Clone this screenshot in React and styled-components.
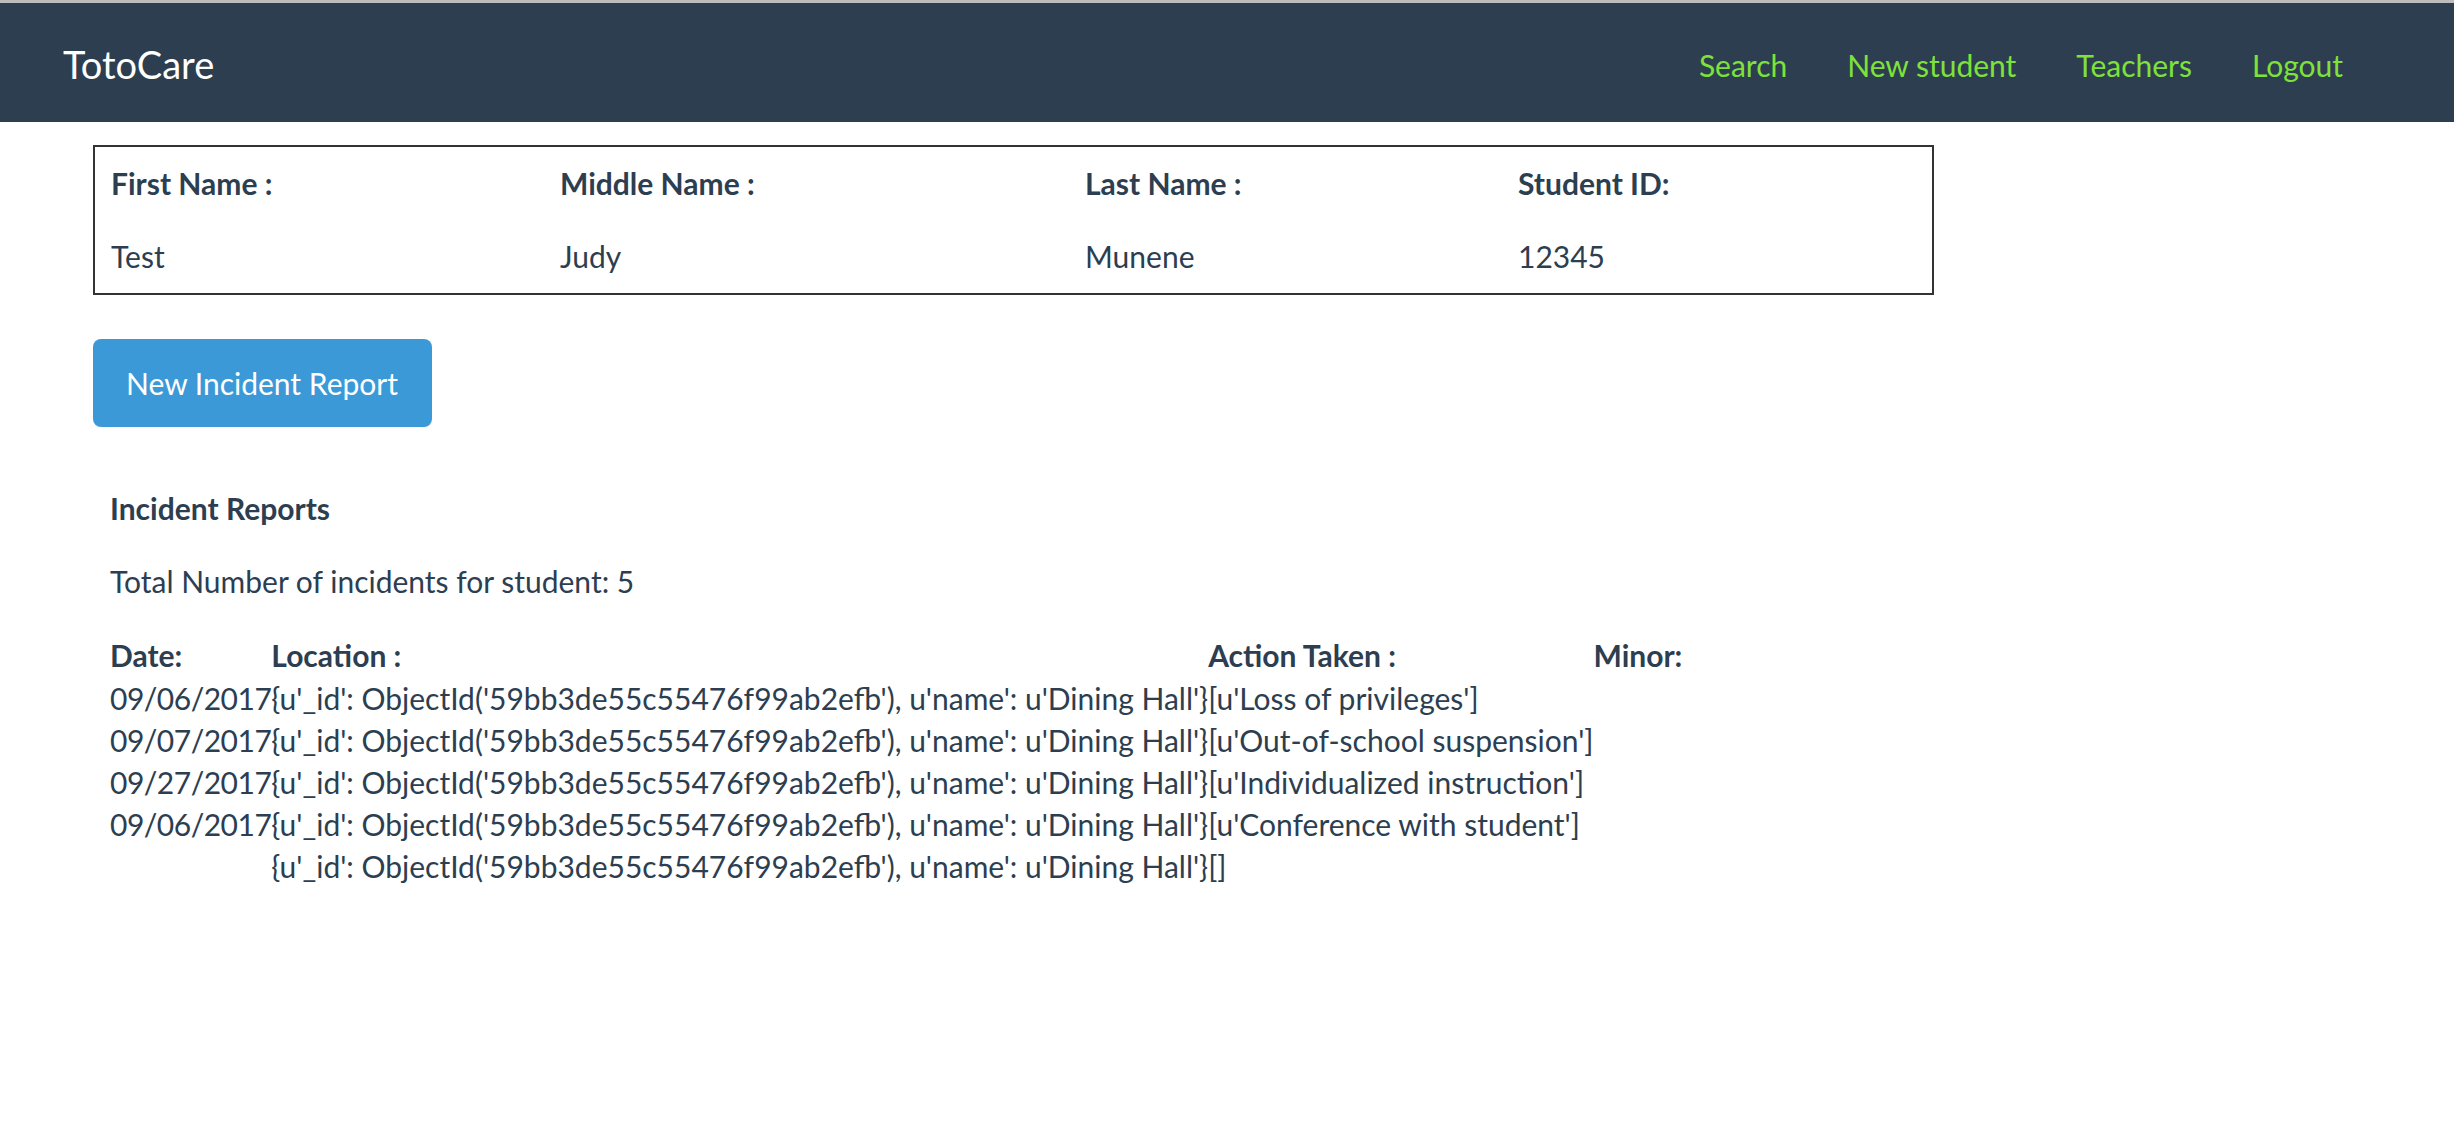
import React from 'react';
import styled, { createGlobalStyle } from 'styled-components';

const navy = '#2c3e50';
const lime = '#7ee23a';
const blue = '#3b99d8';

const GlobalStyle = createGlobalStyle`
  html, body {
    margin: 0;
    padding: 0;
    background: #ffffff;
    font-family: Lato, 'Open Sans', sans-serif;
    color: ${navy};
  }

  * {
    box-sizing: border-box;
  }
`;

const WindowEdge = styled.div`
  height: 3px;
  background: #bcbcbc;
`;

const Navbar = styled.nav`
  height: 119px;
  background: #2d3e50;
  display: flex;
  align-items: center;
  justify-content: space-between;
  padding: 0 81px 0 63px;
`;

const Brand = styled.a`
  font-size: 38px;
  color: #ffffff;
  text-decoration: none;
  padding-top: 2px;
`;

const NavLinks = styled.ul`
  display: flex;
  list-style: none;
  margin: 0;
  padding: 0;
`;

const NavLink = styled.a`
  display: block;
  padding: 4px 30px 0;
  font-size: 30px;
  color: ${lime};
  text-decoration: none;
`;

const Main = styled.main`
  padding: 23px 0 0 93px;
`;

const StudentBox = styled.section`
  width: 1841px;
  border: 2px solid #333333;
  padding-left: 16px;
  display: grid;
  grid-template-columns: 449px 525px 433px 1fr;
`;

const Cell = styled.div`
  font-size: 30px;
  line-height: 43px;
  padding: 15px 0;
  font-weight: ${(p) => (p.$head ? 700 : 400)};
`;

const Button = styled.button`
  margin-top: 44px;
  height: 88px;
  padding: 0 34px 0 33px;
  border: none;
  border-radius: 8px;
  background: ${blue};
  color: #ffffff;
  font-family: Lato, sans-serif;
  font-size: 30px;
  cursor: pointer;
`;

const Reports = styled.section`
  padding: 60px 0 0 17px;
`;

const Title = styled.p`
  margin: 0 0 30px;
  font-size: 30px;
  line-height: 43px;
  font-weight: 700;
`;

const Total = styled.p`
  margin: 0 0 30px;
  font-size: 30px;
  line-height: 43px;
`;

const Table = styled.table`
  border-collapse: collapse;
  font-size: 30px;
  line-height: 42px;

  th, td {
    padding: 0;
    text-align: left;
    white-space: nowrap;
    vertical-align: top;
  }

  th {
    font-weight: 700;
    line-height: 44px;
  }
`;

const DateCell = styled.td`
  letter-spacing: -0.5px;
`;

const student = [
  ['First Name :', 'Test'],
  ['Middle Name :', 'Judy'],
  ['Last Name :', 'Munene'],
  ['Student ID:', '12345'],
];

const location = "{u'_id': ObjectId('59bb3de55c55476f99ab2efb'), u'name': u'Dining Hall'}";

const incidents = [
  ['09/06/2017', "[u'Loss of privileges']"],
  ['09/07/2017', "[u'Out-of-school suspension']"],
  ['09/27/2017', "[u'Individualized instruction']"],
  ['09/06/2017', "[u'Conference with student']"],
  ['', '[]'],
];

export default function App() {
  return (
    <>
      <GlobalStyle />
      <WindowEdge />
      <Navbar>
        <Brand href="#">TotoCare</Brand>
        <NavLinks>
          {['Search', 'New student', 'Teachers', 'Logout'].map((l) => (
            <li key={l}>
              <NavLink href="#">{l}</NavLink>
            </li>
          ))}
        </NavLinks>
      </Navbar>

      <Main>
        <StudentBox>
          {student.map(([label]) => (
            <Cell $head key={label}>{label}</Cell>
          ))}
          {student.map(([label, value]) => (
            <Cell key={value}>{value}</Cell>
          ))}
        </StudentBox>

        <Button>New Incident Report</Button>

        <Reports>
          <Title>Incident Reports</Title>
          <Total>Total Number of incidents for student: 5</Total>
          <Table>
            <thead>
              <tr>
                <th>Date:</th>
                <th>Location :</th>
                <th>Action Taken :</th>
                <th>Minor:</th>
              </tr>
            </thead>
            <tbody>
              {incidents.map(([date, action], i) => (
                <tr key={i}>
                  <DateCell>{date}</DateCell>
                  <td>{location}</td>
                  <td>{action}</td>
                  <td></td>
                </tr>
              ))}
            </tbody>
          </Table>
        </Reports>
      </Main>
    </>
  );
}
